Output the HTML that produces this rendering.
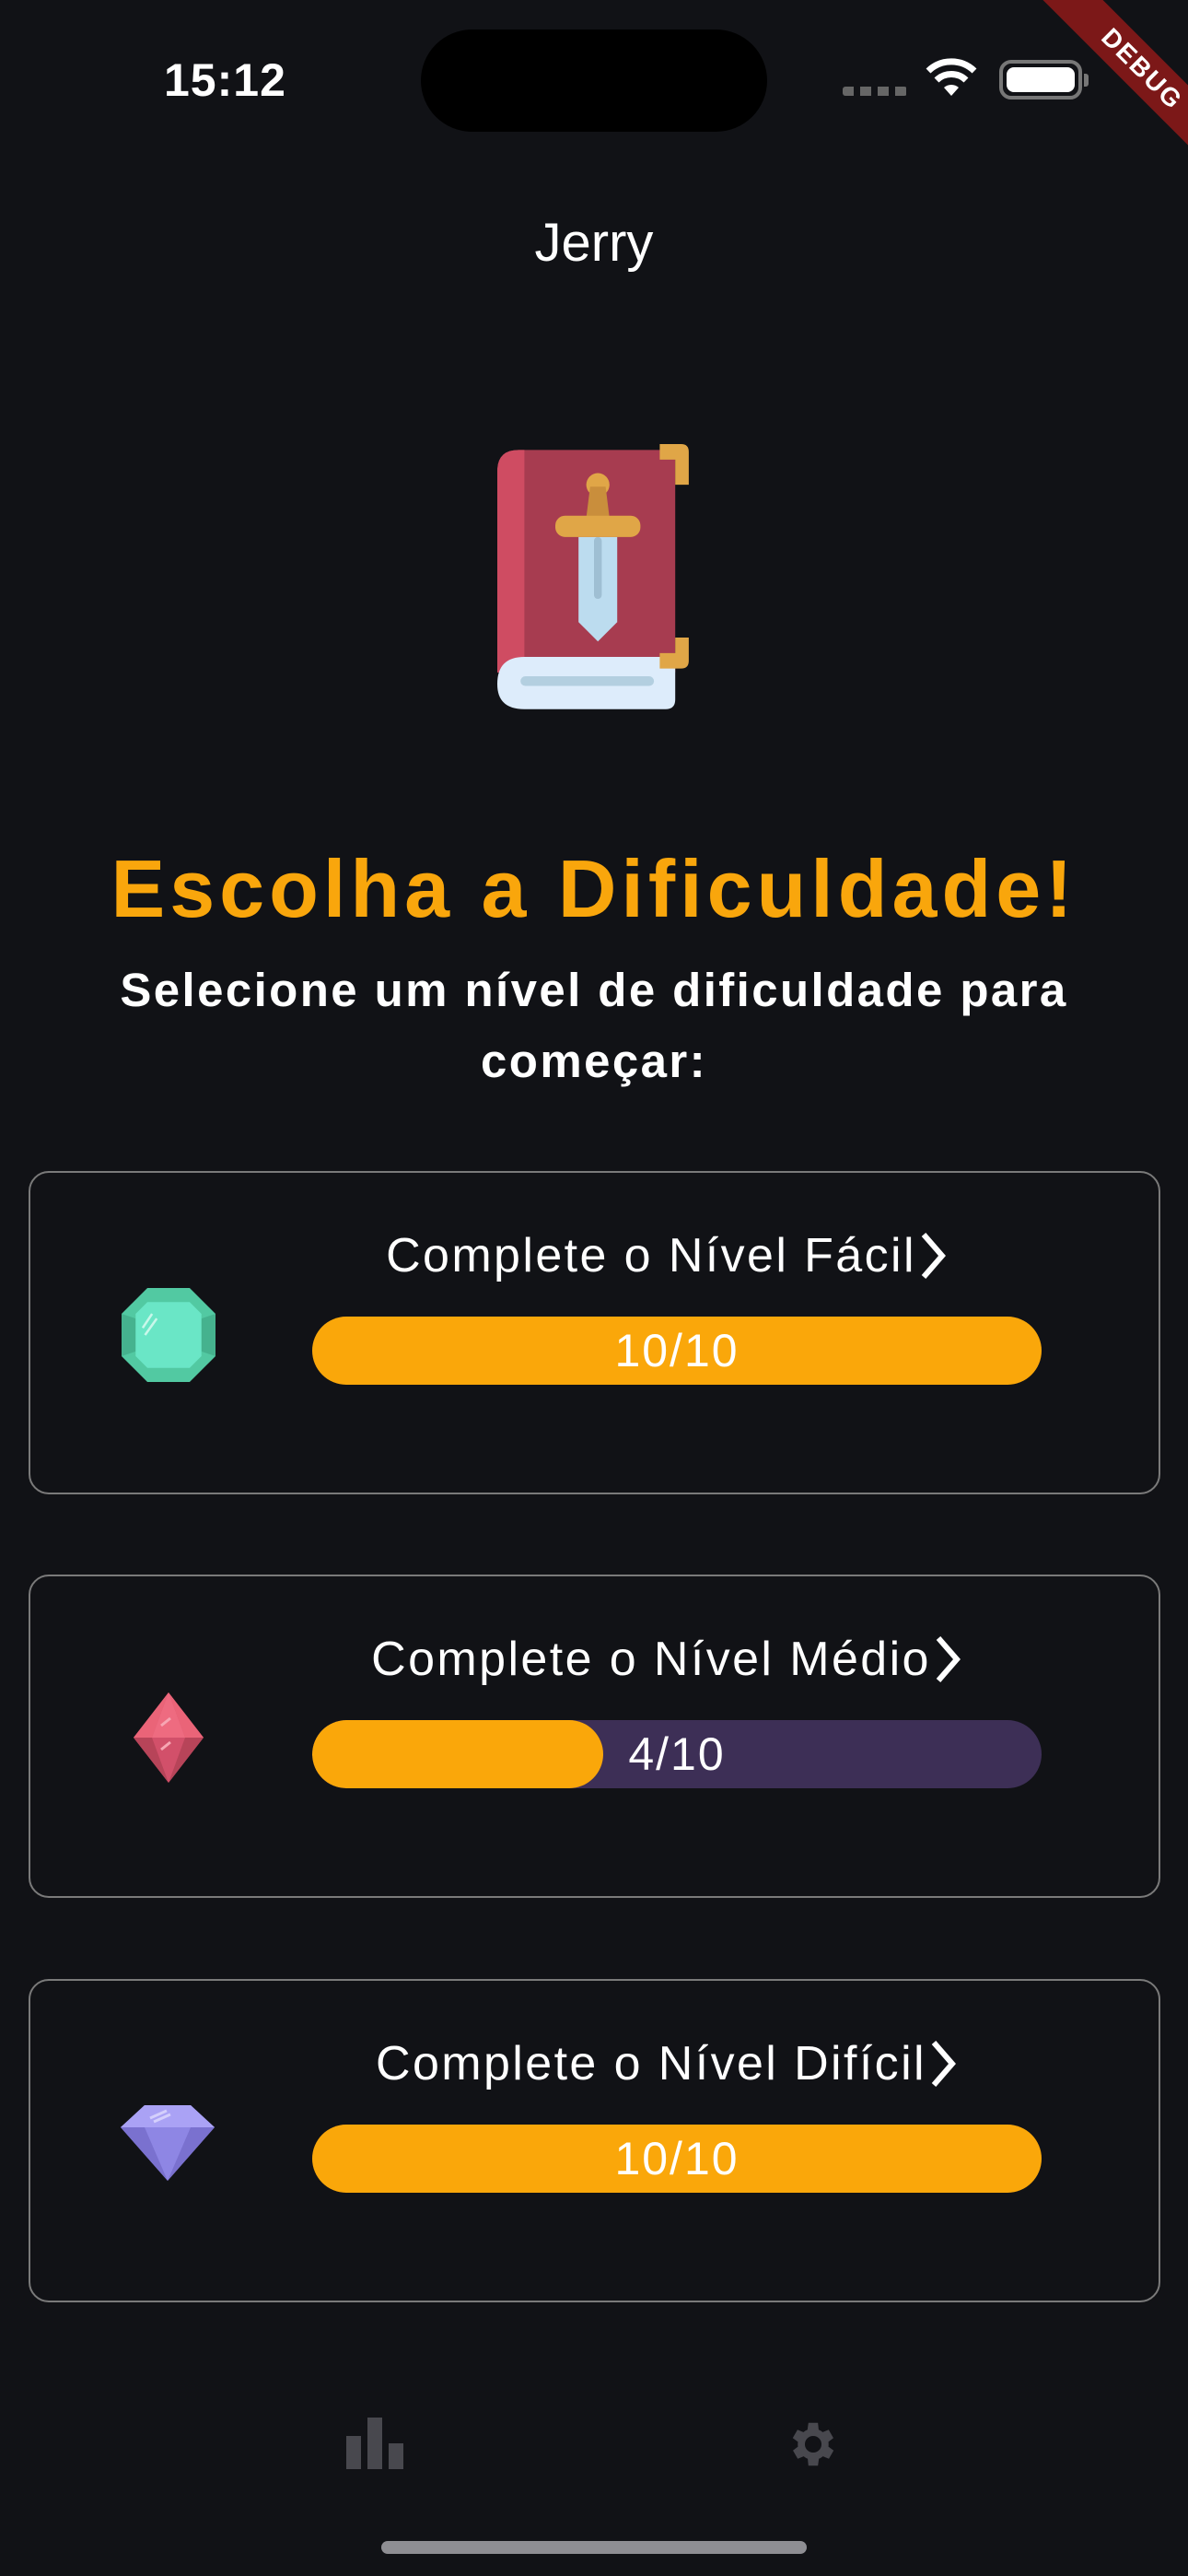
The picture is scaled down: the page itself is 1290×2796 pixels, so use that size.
<!DOCTYPE html>
<html><head><meta charset="utf-8"><style>
*{margin:0;padding:0;box-sizing:border-box}
body{width:1290px;height:2796px;background:#111216;position:relative;overflow:hidden;font-family:"Liberation Sans",sans-serif;color:#fff}
.abs{position:absolute}
.card{position:absolute;left:31px;width:1229px;height:351px;border:2.5px solid #7a7a7a;border-radius:22px}
.title{position:absolute;left:246px;width:890px;text-align:center;font-size:52px;top:52px;line-height:70px;letter-spacing:2.4px;white-space:nowrap}
.title span,.title svg{display:inline-block;vertical-align:middle}
.bar{position:absolute;left:306px;width:792px;height:74px;top:156px;border-radius:37px;background:#faa70a;overflow:hidden}
.bar .t{position:absolute;width:100%;text-align:center;line-height:74px;font-size:50px;letter-spacing:2px}
</style></head><body>
<div class="abs" style="left:178px;top:58px;font-size:50px;font-weight:bold;letter-spacing:1px">15:12</div>
<div class="abs" style="left:457px;top:32px;width:376px;height:111px;border-radius:56px;background:#000"></div>
<div class="abs" style="left:915px;top:94px;width:70px;height:10px;background:repeating-linear-gradient(90deg,#666 0 12px,transparent 12px 19px);border-radius:3px"></div>
<svg class="abs" style="left:1003px;top:62px" width="60" height="44" viewBox="0 0 60 44"><path d="M30 42 L22 33 A12 12 0 0 1 38 33 Z" fill="#fff"/><path d="M14 25 A23 23 0 0 1 46 25" stroke="#fff" stroke-width="7" fill="none"/><path d="M5 15 A36 36 0 0 1 55 15" stroke="#fff" stroke-width="7" fill="none"/></svg>
<div class="abs" style="left:1085px;top:65px;width:90px;height:43px;border:4px solid #777;border-radius:13px;padding:4px"><div style="background:#fff;width:100%;height:100%;border-radius:8px"></div></div>
<div class="abs" style="left:1177px;top:80px;width:5px;height:14px;background:#777;border-radius:0 3px 3px 0"></div>
<div class="abs" style="left:1100px;top:52px;width:280px;height:46px;background:#7c1818;transform:rotate(45deg);text-align:center;color:#fff;font-weight:bold;font-size:28px;line-height:46px;letter-spacing:2px">DEBUG</div>

<div class="abs" style="left:0;width:1290px;top:228px;text-align:center;font-size:58px;line-height:72px">Jerry</div>

<svg class="abs" style="left:540px;top:482px" width="210" height="292" viewBox="0 0 100 139">
<path d="M0 14 Q0 3 11 3 L92 3 L92 118 L0 118 Z" fill="#a73c50"/>
<path d="M0 14 Q0 3 11 3 L14 3 L14 118 L0 118 Z" fill="#cf4c62"/>
<path d="M14 110 L92 110 L92 132 Q92 137 87 137 L14 137 Q0 137 0 124 Q0 110 14 110Z" fill="#ddecfb"/>
<rect x="12" y="120" width="69" height="5" rx="2.5" fill="#b3cfe0"/>
<path d="M42 48 L42 92 L52 102 L62 92 L62 48Z" fill="#bcdcef"/>
<rect x="50" y="48" width="4" height="32" rx="2" fill="#9fbfd3"/>
<circle cx="52" cy="21" r="6" fill="#e0a647"/>
<path d="M48 22 L56 22 L58 38 L46 38Z" fill="#c98e3c"/>
<rect x="30" y="37" width="44" height="11" rx="5" fill="#e0a647"/>
<path d="M84 0 L95 0 Q99 0 99 4 L99 21 L92 21 L92 8 L84 8Z" fill="#e0a647"/>
<path d="M99 100 L99 112 Q99 116 95 116 L84 116 L84 108 L92 108 L92 100Z" fill="#e0a647"/>
</svg>

<div class="abs" style="left:0;width:1290px;top:910px;text-align:center;font-size:88px;font-weight:bold;color:#f9a60c;line-height:110px;letter-spacing:5px;white-space:nowrap">Escolha a Dificuldade!</div>
<div class="abs" style="left:60px;width:1170px;top:1036px;text-align:center;font-size:51px;font-weight:bold;line-height:77px;letter-spacing:2.4px">Selecione um nível de dificuldade para começar:</div>

<div class="card" style="top:1271px">
<svg class="abs" style="left:99px;top:125px" width="102" height="102" viewBox="0 0 40 40"><path d="M11 0 L29 0 L40 11 L40 29 L29 40 L11 40 L0 29 L0 11Z" fill="#52c9a2"/><path d="M0 11 L6 13 L6 27 L0 29Z M40 11 L34 13 L34 27 L40 29Z" fill="#45b28e"/><path d="M11 6 L29 6 L34 11 L34 29 L29 34 L11 34 L6 29 L6 11Z" fill="#6ae6c6"/><path d="M9 17 L13 11 M10 20 L15 13" stroke="#c9f7ea" stroke-width="1"/></svg>
<div class="title"><span>Complete o Nível Fácil</span><svg width="34" height="56" viewBox="0 0 34 56"><path d="M8 5 L28 28 L8 51" stroke="#fff" stroke-width="6" fill="none"/></svg></div>
<div class="bar"><div class="t">10/10</div></div>
</div>

<div class="card" style="top:1709px">
<svg class="abs" style="left:112px;top:126px" width="76" height="98" viewBox="0 0 76 98"><path d="M38 0 L76 49 L38 98 L0 49Z" fill="#d2506a"/><path d="M38 0 L76 49 L56 49 L38 0Z M0 49 L20 49 L38 0Z" fill="#ea6478"/><path d="M20 49 L38 0 L56 49Z" fill="#ee6b80"/><path d="M0 49 L20 49 L38 98Z M76 49 L56 49 L38 98Z" fill="#b74459"/><path d="M30 36 L40 28 M30 62 L40 54" stroke="#f7a6b3" stroke-width="3"/></svg>
<div class="title"><span>Complete o Nível Médio</span><svg width="34" height="56" viewBox="0 0 34 56"><path d="M8 5 L28 28 L8 51" stroke="#fff" stroke-width="6" fill="none"/></svg></div>
<div class="bar" style="background:#3d2f56"><div style="position:absolute;left:0;top:0;width:316px;height:74px;background:#faa70a;border-radius:37px"></div><div class="t">4/10</div></div>
</div>

<div class="card" style="top:2148px">
<svg class="abs" style="left:98px;top:135px" width="102" height="82" viewBox="0 0 102 82"><path d="M26 0 L76 0 L102 24 L51 82 L0 24Z" fill="#8e86e4"/><path d="M26 0 L76 0 L102 24 L0 24Z" fill="#aaa2f5"/><path d="M0 24 L26 24 L51 82Z M102 24 L76 24 L51 82Z" fill="#7a71cf"/><path d="M32 14 L50 6 M36 18 L54 10" stroke="#d4cffc" stroke-width="3"/></svg>
<div class="title"><span>Complete o Nível Difícil</span><svg width="34" height="56" viewBox="0 0 34 56"><path d="M8 5 L28 28 L8 51" stroke="#fff" stroke-width="6" fill="none"/></svg></div>
<div class="bar"><div class="t">10/10</div></div>
</div>

<svg class="abs" style="left:376px;top:2624px" width="62" height="56" viewBox="0 0 62 56"><rect x="0" y="20" width="16" height="36" fill="#48484e"/><rect x="23" y="0" width="16" height="56" fill="#48484e"/><rect x="46" y="28" width="16" height="28" fill="#48484e"/></svg>
<svg class="abs" style="left:852px;top:2622px" width="62" height="62" viewBox="0 0 24 24"><path fill="#48484e" d="M19.4 13a7.5 7.5 0 0 0 0-2l2.1-1.6-2-3.5-2.5 1a7 7 0 0 0-1.7-1L15 3h-4l-.4 2.9a7 7 0 0 0-1.7 1l-2.5-1-2 3.5L6.6 11a7.5 7.5 0 0 0 0 2l-2.1 1.6 2 3.5 2.5-1a7 7 0 0 0 1.7 1L11 21h4l.4-2.9a7 7 0 0 0 1.7-1l2.5 1 2-3.5zM13 15.5a3.5 3.5 0 1 1 0-7 3.5 3.5 0 0 1 0 7z" transform="translate(-1 0)"/></svg>
<div class="abs" style="left:414px;top:2758px;width:462px;height:14px;border-radius:7px;background:#8e8e93"></div>
</body></html>
